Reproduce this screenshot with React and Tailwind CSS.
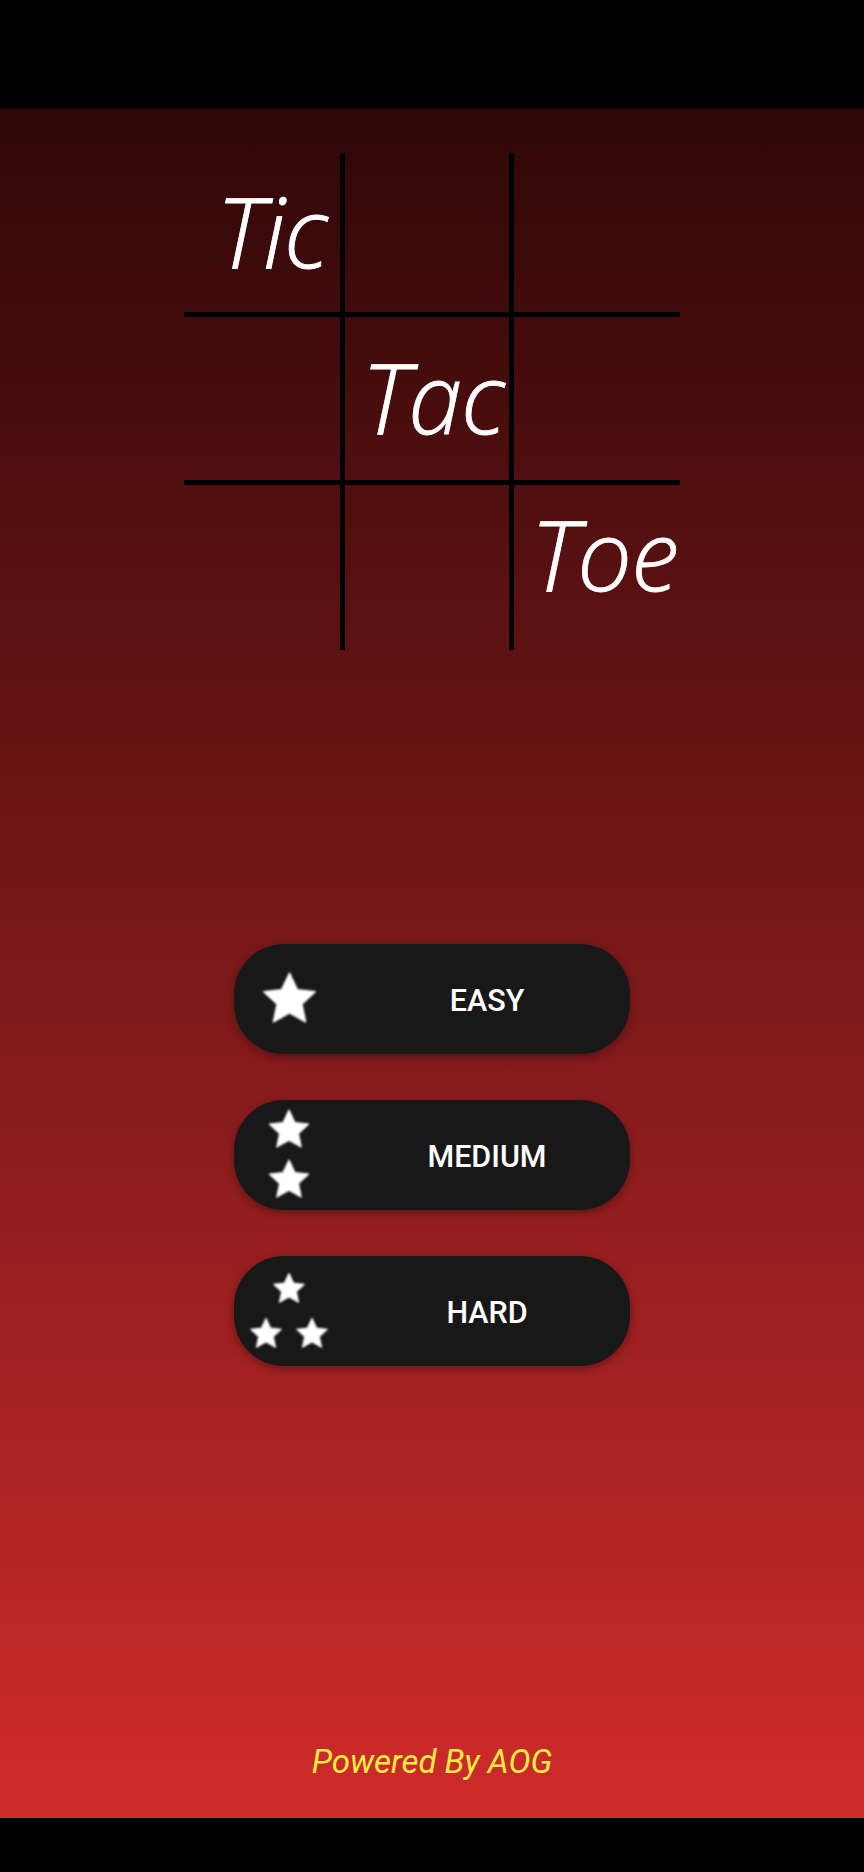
import React from 'react';

const STAR = 'M12 2l2.94 6.26 6.86.78-5.1 4.68 1.4 6.78L12 17.1l-6.1 3.4 1.4-6.78-5.1-4.68 6.86-.78z';

function Star({ className }) {
  return (
    <svg viewBox="0 0 24 24" className={className}>
      <path d={STAR} fill="#ffffff" stroke="#ffffff" strokeWidth="0.6" strokeLinejoin="round" />
    </svg>
  );
}

const levels = [
  {
    key: 'easy',
    label: 'EASY',
    icon: <Star className="w-[63px] h-[63px] blur-[0.8px]" />,
  },
  {
    key: 'medium',
    label: 'MEDIUM',
    icon: (
      <div className="flex flex-col items-center gap-[2px]">
        <Star className="w-[48px] h-[48px] blur-[0.8px]" />
        <Star className="w-[48px] h-[48px] blur-[0.8px]" />
      </div>
    ),
  },
  {
    key: 'hard',
    label: 'HARD',
    icon: (
      <div className="flex flex-col items-center gap-[7px]">
        <Star className="w-[38px] h-[38px] blur-[0.8px]" />
        <div className="flex gap-[8px]">
          <Star className="w-[38px] h-[38px] blur-[0.8px]" />
          <Star className="w-[38px] h-[38px] blur-[0.8px]" />
        </div>
      </div>
    ),
  },
];

function Word({ children, className = '' }) {
  return (
    <div className={`flex items-center justify-end ${className}`}>
      <span
        className="text-white italic font-light text-[97px] leading-none tracking-[-1px] [-webkit-text-stroke:0.8px_white]"
        style={{ fontFamily: '"Open Sans", sans-serif' }}
      >
        {children}
      </span>
    </div>
  );
}

export default function App() {
  return (
    <div className="w-[864px] h-[1872px] flex flex-col" style={{ fontFamily: 'Roboto, sans-serif' }}>
      {/* status bar */}
      <div className="h-[109px] bg-black" />

      <div className="flex-1 flex flex-col items-center bg-gradient-to-b from-[#300708] to-[#d02b2b]">
        {/* title board */}
        <div className="mt-[44px] grid grid-cols-[156px_5px_164px_5px_166px] grid-rows-[159px_5px_163px_5px_165px]">
          <Word className="col-start-1 row-start-1 pr-[13px] pb-[4px]">Tic</Word>
          <Word className="col-start-3 row-start-3 pr-[5px] pb-[4px]">Tac</Word>
          <Word className="col-start-5 row-start-5 pr-[2px] pb-[28px]">Toe</Word>
          <div className="col-start-2 row-start-1 row-span-5 bg-black" />
          <div className="col-start-4 row-start-1 row-span-5 bg-black" />
          <div className="col-start-1 col-span-5 row-start-2 bg-black" />
          <div className="col-start-1 col-span-5 row-start-4 bg-black" />
        </div>

        {/* difficulty */}
        <div className="mt-[294px] flex flex-col gap-[46px]">
          {levels.map((lv) => (
            <button
              key={lv.key}
              className="w-[396px] h-[110px] rounded-[50px] bg-[#181818] shadow-[0_3px_8px_rgba(0,0,0,0.35)] flex items-center"
            >
              <div className="w-[110px] h-full flex items-center justify-center">{lv.icon}</div>
              <span className="flex-1 text-center text-white text-[30.5px] font-medium pt-[3px]">{lv.label}</span>
            </button>
          ))}
        </div>

        <p className="mt-auto pb-[40px] text-[33px] leading-none italic text-[#f7ec45]">Powered By AOG</p>
      </div>

      {/* nav bar */}
      <div className="h-[54px] bg-black" />
    </div>
  );
}
